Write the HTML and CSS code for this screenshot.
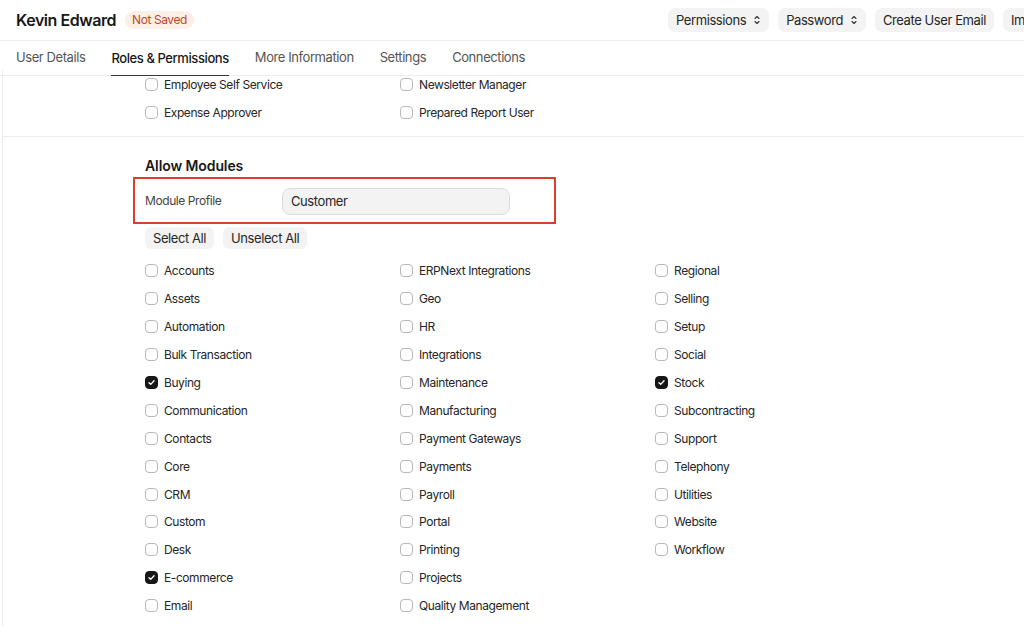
FILE: index.html
```html
<!DOCTYPE html>
<html>
<head>
<meta charset="utf-8">
<link rel="stylesheet" href="styles.css">
</head>
<body>
<div class="page">
  <header class="topbar">
    <div class="title-wrap">
      <h1 class="title">Kevin Edward</h1>
      <span class="badge">Not Saved</span>
    </div>
    <div class="actions">
      <button class="btn">Permissions <svg class="sel" viewBox="0 0 8 12" width="8" height="12"><path d="M2 4.5 L4 2.5 L6 4.5 M2 7.5 L4 9.5 L6 7.5" fill="none" stroke="#333" stroke-width="1.1" stroke-linecap="round" stroke-linejoin="round"/></svg></button>
      <button class="btn">Password <svg class="sel" viewBox="0 0 8 12" width="8" height="12"><path d="M2 4.5 L4 2.5 L6 4.5 M2 7.5 L4 9.5 L6 7.5" fill="none" stroke="#333" stroke-width="1.1" stroke-linecap="round" stroke-linejoin="round"/></svg></button>
      <button class="btn">Create User Email</button>
      <button class="btn">Impersonate</button>
    </div>
  </header>
  <nav class="tabs">
    <span class="tab">User Details</span>
    <span class="tab active">Roles &amp; Permissions</span>
    <span class="tab">More Information</span>
    <span class="tab">Settings</span>
    <span class="tab">Connections</span>
  </nav>
  <main class="content">
    <section class="roles">
      <div class="grid grid2">
        <label class="check"><span class="box"></span>Employee Self Service</label>
        <label class="check"><span class="box"></span>Newsletter Manager</label>
        <label class="check"><span class="box"></span>Expense Approver</label>
        <label class="check"><span class="box"></span>Prepared Report User</label>
      </div>
    </section>
    <section class="modules">
      <h2 class="section-title">Allow Modules</h2>
      <div class="profile-row">
        <span class="field-label">Module Profile</span>
        <div class="input">Customer</div>
      </div>
      <div class="btn-row">
        <button class="btn small">Select All</button>
        <button class="btn small">Unselect All</button>
      </div>
      <div class="grid grid3">
        <div class="col">
          <label class="check"><span class="box"></span>Accounts</label>
          <label class="check"><span class="box"></span>Assets</label>
          <label class="check"><span class="box"></span>Automation</label>
          <label class="check"><span class="box"></span>Bulk Transaction</label>
          <label class="check"><span class="box on"></span>Buying</label>
          <label class="check"><span class="box"></span>Communication</label>
          <label class="check"><span class="box"></span>Contacts</label>
          <label class="check"><span class="box"></span>Core</label>
          <label class="check"><span class="box"></span>CRM</label>
          <label class="check"><span class="box"></span>Custom</label>
          <label class="check"><span class="box"></span>Desk</label>
          <label class="check"><span class="box on"></span>E-commerce</label>
          <label class="check"><span class="box"></span>Email</label>
        </div>
        <div class="col">
          <label class="check"><span class="box"></span>ERPNext Integrations</label>
          <label class="check"><span class="box"></span>Geo</label>
          <label class="check"><span class="box"></span>HR</label>
          <label class="check"><span class="box"></span>Integrations</label>
          <label class="check"><span class="box"></span>Maintenance</label>
          <label class="check"><span class="box"></span>Manufacturing</label>
          <label class="check"><span class="box"></span>Payment Gateways</label>
          <label class="check"><span class="box"></span>Payments</label>
          <label class="check"><span class="box"></span>Payroll</label>
          <label class="check"><span class="box"></span>Portal</label>
          <label class="check"><span class="box"></span>Printing</label>
          <label class="check"><span class="box"></span>Projects</label>
          <label class="check"><span class="box"></span>Quality Management</label>
        </div>
        <div class="col">
          <label class="check"><span class="box"></span>Regional</label>
          <label class="check"><span class="box"></span>Selling</label>
          <label class="check"><span class="box"></span>Setup</label>
          <label class="check"><span class="box"></span>Social</label>
          <label class="check"><span class="box on"></span>Stock</label>
          <label class="check"><span class="box"></span>Subcontracting</label>
          <label class="check"><span class="box"></span>Support</label>
          <label class="check"><span class="box"></span>Telephony</label>
          <label class="check"><span class="box"></span>Utilities</label>
          <label class="check"><span class="box"></span>Website</label>
          <label class="check"><span class="box"></span>Workflow</label>
        </div>
      </div>
    </section>
  </main>
</div>
</body>
</html>
```

FILE: styles.css
```css
* { box-sizing: border-box; }
html, body { margin: 0; padding: 0; background: #fff; }
body {
  font-family: Inter, "Noto Sans", sans-serif;
  color: #1f272e;
  width: 1024px;
  height: 626px;
  overflow: hidden;
  letter-spacing: -0.026em;
}
.page { width: 1024px; }
.topbar {
  height: 41px;
  display: flex;
  align-items: center;
  justify-content: space-between;
  padding-left: 16px;
  border-bottom: 1px solid #ededed;
  overflow: hidden;
}
.title-wrap { display: flex; align-items: center; gap: 9px; }
.title { margin: 0; font-size: 16px; font-weight: 600; color: #171717; letter-spacing: -0.45px; }
.badge {
  background: #fdefe6;
  color: #c4472a;
  font-size: 12px;
  padding: 3px 7px;
  border-radius: 9px;
  line-height: 12px;
}
.actions { display: flex; gap: 9px; margin-right: -67px; flex-shrink: 0; }
.btn {
  font-family: inherit;
  letter-spacing: inherit;
  font-size: 13px;
  color: #262626;
  background: #f3f3f3;
  border: none;
  border-radius: 7px;
  height: 24px;
  padding: 0 8px;
  display: inline-flex;
  align-items: center;
  gap: 7px;
  white-space: nowrap;
}
.sel { display: block; }
.tabs {
  height: 35px;
  display: flex;
  gap: 26px;
  padding-left: 16px;
  border-bottom: 1px solid #ededed;
}
.tab {
  font-size: 13px;
  color: #555;
  display: flex;
  align-items: center;
  padding-bottom: 1px;
  border-bottom: 1px solid transparent;
}
.tab.active {
  color: #171717;
  font-weight: 500;
  border-bottom-color: #383838;
  margin-bottom: -1px;
}
.content {
  margin-left: 2px;
  border-left: 1px solid #ededed;
  height: 560px;
}
.roles {
  margin-top: -6px;
  padding: 0 0 10px 142px;
  border-bottom: 1px solid #ededed;
}
.grid2 {
  display: grid;
  grid-template-columns: 255px 255px;
}
.check {
  display: flex;
  align-items: center;
  gap: 6px;
  height: 27.9px;
  font-size: 12px;
  color: #262626;
}
.roles .check { height: 28px; }
.box {
  width: 13px;
  height: 13px;
  border: 1px solid #b8b8b8;
  border-radius: 4px;
  background: #fff;
  flex-shrink: 0;
}
.box.on {
  background: #171717 url("data:image/svg+xml,%3Csvg xmlns='http://www.w3.org/2000/svg' viewBox='0 0 13 13'%3E%3Cpath d='M3.5 6.7 L5.6 8.7 L9.5 4.5' fill='none' stroke='white' stroke-width='1.6' stroke-linecap='round' stroke-linejoin='round'/%3E%3C/svg%3E") center/100% no-repeat;
  border-color: #171717;
}
.modules { padding: 20px 0 0 142px; }
.section-title {
  margin: 0 0 2px 0;
  font-size: 14px;
  font-weight: 600;
  color: #171717;
  height: 18px;
  line-height: 18px;
  letter-spacing: -0.1px;
}
.profile-row {
  width: 423px;
  margin-left: -12px;
  height: 47px;
  border: 2px solid #d8402b;
  display: flex;
  align-items: center;
  padding-left: 10px;
}
.field-label { font-size: 12px; color: #444; width: 137px; }
.input {
  width: 228px;
  height: 27px;
  border: 1px solid #dcdcdc;
  border-radius: 8px;
  background: #f3f3f3;
  font-size: 13px;
  padding-left: 8px;
  display: flex;
  align-items: center;
  color: #262626;
  margin-top: 1px;
}
.btn-row { display: flex; gap: 9px; margin: 3px 0 8px 0; }
.btn.small { height: 22px; padding: 0 8px; border-radius: 6px; }
.grid3 {
  display: grid;
  grid-template-columns: 255px 255px 255px;
}
.col { display: flex; flex-direction: column; }
```
